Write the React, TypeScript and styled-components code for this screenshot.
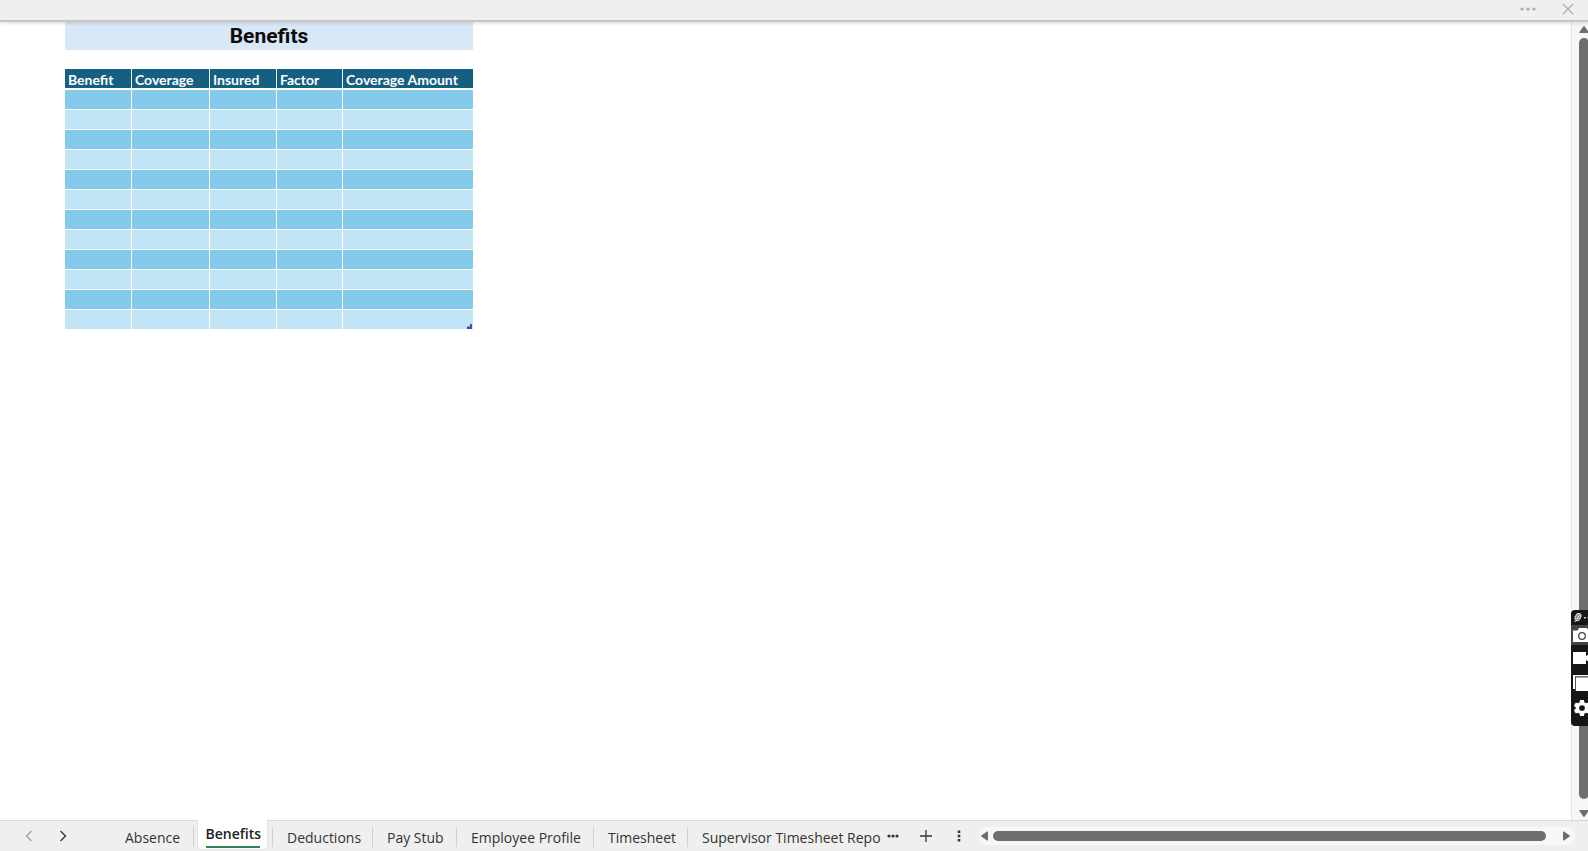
import React from "react";
import styled, { createGlobalStyle } from "styled-components";

const Global = createGlobalStyle`
  * { box-sizing: border-box; }
  html, body, #root { height: 100%; }
  body { margin: 0; overflow: hidden; background: #efefef; font-family: "Open Sans", "Noto Sans", sans-serif; }
  button { border: 0; padding: 0; margin: 0; background: none; font: inherit; color: inherit; cursor: pointer; }
  svg { display: block; flex: none; }
`;

const Window = styled.div`
  position: relative;
  display: flex;
  flex-direction: column;
  height: 100vh;
  overflow: hidden;
`;

const TopBar = styled.header`
  position: relative;
  z-index: 1;
  flex: none;
  display: flex;
  justify-content: flex-end;
  align-items: center;
  gap: 26px;
  height: 22px;
  padding: 0 13px 2px 0;
  background: #efefef;
  border-bottom: 2px solid #c6c6c6;
  box-shadow: 0 1px 4px rgba(0, 0, 0, 0.16);
`;

const Middle = styled.div`
  flex: 1;
  min-height: 0;
  display: flex;
`;

const Sheet = styled.main`
  flex: 1;
  min-width: 0;
  overflow: hidden;
  padding-left: 65px;
  background: #fff;
`;

const Title = styled.h1`
  width: 408px;
  height: 28px;
  margin: 0 0 19px;
  background: #d9e8f6;
  color: #0c0c0c;
  text-align: center;
  font: 700 21px/28px Roboto, sans-serif;
`;

const TableWrap = styled.div`
  position: relative;
  width: 408px;
`;

const Table = styled.table`
  width: 408px;
  table-layout: fixed;
  border-collapse: separate;
  border-spacing: 0;
`;

const Col = styled.col<{ $w: number }>`
  width: ${(p) => p.$w}px;
`;

const HeadCell = styled.th`
  height: 21px;
  padding: 3px 0 0 3px;
  background: #156082;
  border-bottom: 2px solid #fff;
  border-right: 1px solid #fff;
  color: #fff;
  text-align: left;
  white-space: nowrap;
  font: 700 14px/16px Lato, sans-serif;
  &:last-child { border-right: 0; }
`;

const Cell = styled.td`
  height: 20px;
  padding: 0;
  border-bottom: 1px solid #fff;
  border-right: 1px solid #fff;
  &:last-child { border-right: 0; }
`;

const Row = styled.tr`
  background: #c0e4f5;
  &:nth-child(odd) { background: #83caeb; }
`;

const ResizeMark = styled.svg`
  position: absolute;
  right: 1px;
  bottom: 1px;
`;

const VScroll = styled.aside`
  flex: none;
  width: 17px;
  overflow: hidden;
  display: flex;
  flex-direction: column;
  align-items: flex-start;
  padding: 4px 0 2px 7px;
  background: #f7f7f7;
  border-left: 1px solid #e3e3e3;
`;

const ArrowButton = styled.button`
  flex: none;
  display: flex;
  align-items: center;
  justify-content: center;
`;

const VThumb = styled.div`
  flex: 1;
  width: 10px;
  margin: 4px 0 11px;
  border-radius: 5px;
  background: #6e6e6e;
`;

const BottomBar = styled.footer`
  flex: none;
  display: flex;
  align-items: flex-start;
  height: 31px;
  border-top: 1px solid #d9d9d9;
  background: #efefef;
  color: #333;
`;

const NavButtons = styled.div`
  flex: none;
  display: flex;
  gap: 20px;
  width: 111px;
  height: 30px;
  padding-left: 22px;
`;

const IconButton = styled.button`
  display: flex;
  align-items: center;
  justify-content: center;
  width: 14px;
  height: 100%;
`;

const Tabs = styled.nav`
  flex: none;
  display: flex;
  height: 30px;
`;

const Tab = styled.button<{ $w: number; $last?: boolean }>`
  position: relative;
  width: ${(p) => p.$w}px;
  padding: 4px 0 0 14px;
  text-align: left;
  white-space: nowrap;
  font-size: 14px;
  line-height: 24px;
  &::after {
    content: "";
    position: absolute;
    top: 6px;
    right: 0;
    width: 1px;
    height: 20px;
    background: ${(p) => (p.$last ? "transparent" : "#cfcfcf")};
  }
`;

const ActiveTab = styled.button`
  width: 71px;
  height: 30px;
  margin: -1px 4px 0 3px;
  padding: 1px 0 0;
  background: #fff;
  border: 1px solid #e2e2e2;
  border-top: 0;
  border-radius: 0 0 4px 4px;
  color: #222;
  font-size: 14px;
  font-weight: 600;
  line-height: 24px;
`;

const ActiveLabel = styled.span`
  display: block;
  width: 54px;
  height: 26px;
  margin: 0 auto;
  border-bottom: 2px solid #2f8354;
  white-space: nowrap;
`;

const Divider = styled.span`
  width: 1px;
  height: 20px;
  margin-top: 6px;
  background: #cfcfcf;
`;

const Actions = styled.div`
  flex: none;
  display: flex;
  gap: 19px;
  height: 30px;
  padding: 0 13px 0 7px;
`;

const HScroll = styled.div`
  flex: 1;
  min-width: 0;
  display: flex;
  align-items: center;
  gap: 5px;
  height: 18px;
  margin: 6px 13px 0 0;
  padding: 0 5px 0 2px;
  border-radius: 8px;
  background: #f7f7f7;
`;

const HThumb = styled.div`
  flex: 1;
  height: 10px;
  margin-right: 12px;
  border-radius: 5px;
  background: #6e6e6e;
`;

const Recorder = styled.div`
  position: absolute;
  z-index: 2;
  right: -24px;
  bottom: 125px;
  display: flex;
  flex-direction: column;
  width: 41px;
  height: 116px;
  border-radius: 4px;
  overflow: hidden;
  background: #161616;
`;

const RecorderHead = styled.div`
  height: 15px;
  padding: 3px 0 0 2px;
`;

const Tool = styled.button<{ $active?: boolean }>`
  display: flex;
  align-items: center;
  height: ${(p) => (p.$active ? 20 : 25)}px;
  padding-left: 2px;
  background: ${(p) => (p.$active ? "#444" : "transparent")};
`;

const columns = [
  { name: "Benefit", w: 67 },
  { name: "Coverage", w: 78 },
  { name: "Insured", w: 67 },
  { name: "Factor", w: 66 },
  { name: "Coverage Amount", w: 130 },
];

const sheets = [
  { name: "Deductions", w: 100 },
  { name: "Pay Stub", w: 84 },
  { name: "Employee Profile", w: 137 },
  { name: "Timesheet", w: 94 },
  { name: "Supervisor Timesheet Repo", w: 191, last: true },
];

const rows = Array.from({ length: 12 }, (_, i) => i);

export default function App() {
  return (
    <Window>
      <Global />
      <TopBar>
        <IconButton aria-label="More options">
          <svg width="18" height="6" viewBox="0 0 18 6" fill="#a9a9a9">
            <circle cx="3" cy="3" r="1.6" />
            <circle cx="9" cy="3" r="1.6" />
            <circle cx="15" cy="3" r="1.6" />
          </svg>
        </IconButton>
        <IconButton aria-label="Close">
          <svg width="12" height="12" viewBox="0 0 12 12" stroke="#b0b0b0" strokeWidth="1.3">
            <path d="M.8.8l10.4 10.4M11.2.8L.8 11.2" />
          </svg>
        </IconButton>
      </TopBar>
      <Middle>
        <Sheet>
          <Title>Benefits</Title>
          <TableWrap>
            <Table>
              <colgroup>
                {columns.map((c) => (
                  <Col key={c.name} $w={c.w} />
                ))}
              </colgroup>
              <thead>
                <tr>
                  {columns.map((c) => (
                    <HeadCell key={c.name} scope="col">{c.name}</HeadCell>
                  ))}
                </tr>
              </thead>
              <tbody>
                {rows.map((r) => (
                  <Row key={r}>
                    {columns.map((c) => (
                      <Cell key={c.name} />
                    ))}
                  </Row>
                ))}
              </tbody>
            </Table>
            <ResizeMark width="5" height="5" viewBox="0 0 5 5" fill="#3f4fa5">
              <path d="M3 0h2v5H0V2.500h3z" />
            </ResizeMark>
          </TableWrap>
        </Sheet>
        <VScroll>
          <ArrowButton aria-label="Scroll up">
            <svg width="10" height="8" viewBox="0 0 10 8" fill="#6e6e6e">
              <path d="M4.2.6Q5 -.3 5.800.6L9.600 6.200Q10 7 9.200 7H.8Q0 7 .4 6.200z" />
            </svg>
          </ArrowButton>
          <VThumb />
          <ArrowButton aria-label="Scroll down">
            <svg width="10" height="8" viewBox="0 0 10 8" fill="#6e6e6e">
              <path d="M.8 0H9.200Q10 0 9.600.8L5.800 6.400Q5 7.300 4.200 6.400L.4.8Q0 0 .8 0z" />
            </svg>
          </ArrowButton>
        </VScroll>
      </Middle>
      <BottomBar>
        <NavButtons>
          <IconButton aria-label="Previous sheet">
            <svg width="8" height="12" viewBox="0 0 8 12" fill="none" stroke="#9a9a9a" strokeWidth="1.200">
              <path d="M6.500 1L1.500 6l5 5" />
            </svg>
          </IconButton>
          <IconButton aria-label="Next sheet">
            <svg width="8" height="12" viewBox="0 0 8 12" fill="none" stroke="#333" strokeWidth="1.300">
              <path d="M1.500 1l5 5-5 5" />
            </svg>
          </IconButton>
        </NavButtons>
        <Tabs>
          <Tab $w={83}>Absence</Tab>
          <ActiveTab aria-current="page">
            <ActiveLabel>Benefits</ActiveLabel>
          </ActiveTab>
          <Divider />
          {sheets.map((s) => (
            <Tab key={s.name} $w={s.w} $last={s.last}>{s.name}</Tab>
          ))}
        </Tabs>
        <Actions>
          <IconButton aria-label="More sheets">
            <svg width="12" height="4" viewBox="0 0 12 4" fill="#333">
              <circle cx="2" cy="2" r="1.600" />
              <circle cx="6" cy="2" r="1.600" />
              <circle cx="10" cy="2" r="1.600" />
            </svg>
          </IconButton>
          <IconButton aria-label="New sheet">
            <svg width="12" height="12" viewBox="0 0 12 12" stroke="#333" strokeWidth="1.300">
              <path d="M6 0v12M0 6h12" />
            </svg>
          </IconButton>
          <IconButton aria-label="Sheet options">
            <svg width="4" height="12" viewBox="0 0 4 12" fill="#333">
              <path d="M.700.500h2.600v2.600H.700zM.700 4.700h2.600v2.600H.700zM.700 8.900h2.600v2.600H.700z" />
            </svg>
          </IconButton>
        </Actions>
        <HScroll>
          <ArrowButton aria-label="Scroll left">
            <svg width="7" height="10" viewBox="0 0 7 10" fill="#6e6e6e">
              <path d="M7 .8V9.200Q7 10 6.200 9.600L.6 5.800Q-.3 5 .6 4.200L6.200.4Q7 0 7 .8z" />
            </svg>
          </ArrowButton>
          <HThumb />
          <ArrowButton aria-label="Scroll right">
            <svg width="7" height="10" viewBox="0 0 7 10" fill="#6e6e6e">
              <path d="M0 .8V9.200Q0 10 .8 9.600L6.400 5.800Q7.300 5 6.400 4.200L.8.4Q0 0 0 .8z" />
            </svg>
          </ArrowButton>
        </HScroll>
      </BottomBar>
      <Recorder>
        <RecorderHead>
          <svg width="30" height="10" viewBox="0 0 30 10">
            <ellipse cx="5" cy="4" rx="2.600" ry="3.800" transform="rotate(30 5 4)" fill="#8f8f8f" stroke="#ddd" />
            <path d="M4 6l2.500-4M1.500 8.500l2.500-1" stroke="#eee" />
            <path d="M11 4h2v1.500h-2zM14.500 4h2v1.500h-2z" fill="#ccc" />
          </svg>
        </RecorderHead>
        <Tool $active aria-label="Take photo">
          <svg width="20" height="14" viewBox="0 0 20 14">
            <path d="M0 2.500h4.500L6 0h8l1.500 2.500H20V14H0z" fill="#fff" />
            <circle cx="9" cy="8" r="3.300" fill="#fff" stroke="#444" strokeWidth="1.300" />
          </svg>
        </Tool>
        <Tool aria-label="Record video">
          <svg width="20" height="12" viewBox="0 0 20 12" fill="#fff">
            <path d="M0 0h13v4L18 1v10l-5-3V12H0z" />
          </svg>
        </Tool>
        <Tool aria-label="Gallery">
          <svg width="22" height="16" viewBox="0 0 22 16">
            <path d="M0 14V0h20v1.500H2V14z" fill="#fff" />
            <path d="M2 1.500h20V16H2z" fill="#555" />
            <path d="M3 2.500h19V16H3z" fill="#fff" />
          </svg>
        </Tool>
        <Tool aria-label="Settings">
          <svg width="18" height="18" viewBox="0 0 18 19">
            <path
              fill="#fff"
              fillRule="evenodd"
              d="M7 1h4l.5 2.400 1.700 1 2.300-.8 2 3.400-1.800 1.600v1.800l1.800 1.600-2 3.400-2.300-.8-1.700 1L11 18H7l-.5-2.400-1.700-1-2.300.8-2-3.400 1.800-1.600V8.600L.500 7l2-3.400 2.300.8 1.700-1zM9 6.500a3 3 0 1 0 0 6 3 3 0 0 0 0-6z"
            />
          </svg>
        </Tool>
      </Recorder>
    </Window>
  );
}
